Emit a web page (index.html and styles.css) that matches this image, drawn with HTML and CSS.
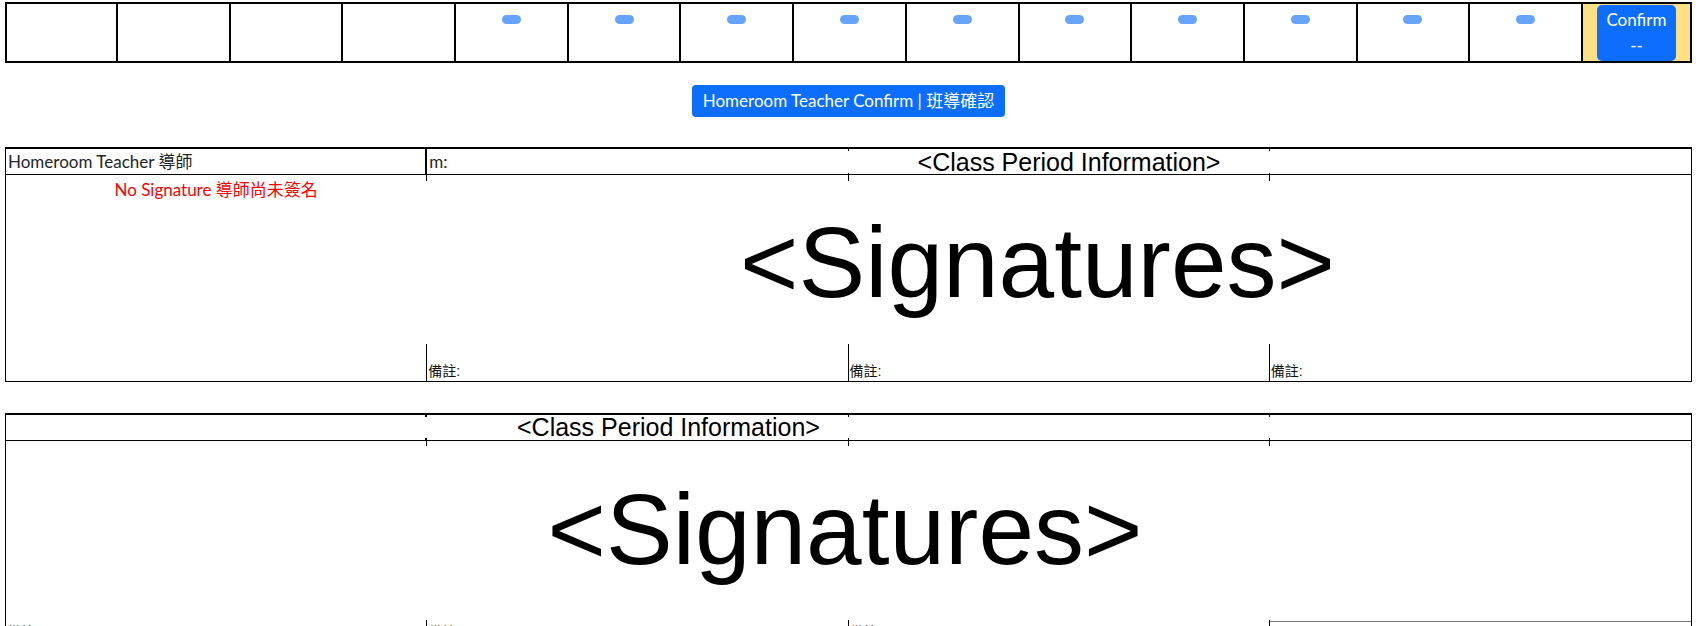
FILE: index.html
```html
<!DOCTYPE html>
<html lang="zh-Hant">
<head>
<meta charset="utf-8">
<title>Homeroom Teacher Confirm</title>
<link rel="stylesheet" href="styles.css">
</head>
<body>
<div class="page">
  <div class="steps">
    <div class="step"></div>
    <div class="step"></div>
    <div class="step"></div>
    <div class="step"></div>
    <div class="step"><span class="pill"></span></div>
    <div class="step"><span class="pill"></span></div>
    <div class="step"><span class="pill"></span></div>
    <div class="step"><span class="pill"></span></div>
    <div class="step"><span class="pill"></span></div>
    <div class="step"><span class="pill"></span></div>
    <div class="step"><span class="pill"></span></div>
    <div class="step"><span class="pill"></span></div>
    <div class="step"><span class="pill"></span></div>
    <div class="step"><span class="pill"></span></div>
    <div class="step step-confirm"><button class="btn-confirm">Confirm<br>--</button></div>
  </div>

  <div class="action">
    <button class="btn-homeroom">Homeroom Teacher Confirm | 班導確認</button>
  </div>

  <section class="sheet sheet-one">
    <div class="cell head first">Homeroom Teacher 導師</div>
    <div class="cell head">m:</div>
    <div class="cell head"></div>
    <div class="cell head last"></div>
    <div class="cell sig"><span class="nosig">No Signature 導師尚未簽名</span></div>
    <div class="cell sig"></div>
    <div class="cell sig"></div>
    <div class="cell sig last"></div>
    <div class="cell note"></div>
    <div class="cell note">備註:</div>
    <div class="cell note">備註:</div>
    <div class="cell note last">備註:</div>
    <div class="mask mask-head-one">&lt;Class Period Information&gt;</div>
    <div class="mask mask-sig-one">&lt;Signatures&gt;</div>
  </section>

  <section class="sheet sheet-two">
    <div class="cell head first"></div>
    <div class="cell head"></div>
    <div class="cell head"></div>
    <div class="cell head last"></div>
    <div class="cell sig"></div>
    <div class="cell sig"></div>
    <div class="cell sig"></div>
    <div class="cell sig last"></div>
    <div class="cell note">備註:</div>
    <div class="cell note">備註:</div>
    <div class="cell note">備註:</div>
    <div class="cell note last ruled"></div>
    <div class="mask mask-head-two">&lt;Class Period Information&gt;</div>
    <div class="mask mask-sig-two">&lt;Signatures&gt;</div>
  </section>
</div>
</body>
</html>
```

FILE: styles.css
```css
* { box-sizing: border-box; }

html, body {
  margin: 0;
  padding: 0;
  background: #fff;
  overflow: hidden;
}

body {
  font-family: Lato, "Noto Sans CJK TC", sans-serif;
  font-size: 16px;
  color: #212529;
}

.page {
  padding: 2px 9px 0 5px;
}

/* top step strip */
.steps {
  display: grid;
  grid-template-columns: 109px repeat(13, 1fr) 109px;
  border: 2px solid #000;
}

.step {
  height: 57px;
}

.step + .step {
  border-left: 2px solid #000;
}

.pill {
  display: block;
  width: 19px;
  height: 9px;
  margin: 11px auto 0;
  border-radius: 5px;
  background: #66a3fb;
}

.step-confirm {
  background: #fddf85;
  padding: 1px 14px 0;
}

.btn-confirm {
  display: block;
  width: 100%;
  height: 56px;
  border: 0;
  border-radius: 5px;
  background: #0d6efd;
  color: #fff;
  font-family: Lato, sans-serif;
  font-size: 17px;
  line-height: 26px;
  padding: 0;
}

/* homeroom action */
.action {
  display: flex;
  justify-content: center;
  padding-top: 22px;
}

.btn-homeroom {
  border: 0;
  border-radius: 4px;
  background: #0d6efd;
  color: #fff;
  font-family: Lato, "Noto Sans CJK TC", sans-serif;
  font-size: 17px;
  font-weight: 400;
  line-height: 24px;
  padding: 4px 11px;
}

/* signature sheets */
.sheet {
  position: relative;
  display: grid;
  grid-template-columns: repeat(4, 1fr);
  border: 1px solid #000;
  border-top-width: 2px;
}

.sheet-one {
  margin-top: 30px;
  grid-template-rows: 26px 170px 36px;
}

.sheet-two {
  margin-top: 31px;
  grid-template-rows: 26px 180px 40px;
}

.cell {
  border-right: 1px solid #000;
  min-width: 0;
}

.cell.last {
  border-right: 0;
}

.head {
  border-bottom: 1px solid #000;
  padding: 0 2px;
  font-size: 17px;
  line-height: 25px;
  white-space: nowrap;
  overflow: hidden;
}

.head.first {
  border-right-width: 2px;
}

.sig {
  text-align: center;
  padding-top: 5px;
}

.nosig {
  color: #ff0000;
  font-size: 17px;
  line-height: 20px;
}

.note {
  display: flex;
  align-items: flex-end;
  padding: 0 1px 2px;
  font-family: "Liberation Sans", "Noto Sans CJK TC", sans-serif;
  font-size: 14px;
  line-height: 16px;
  color: #111;
}

.sheet-two .note {
  align-items: flex-start;
  padding-top: 3px;
}

.ruled {
  border-top: 1px solid #777;
}

/* placeholder masks laid over the sheet */
.mask {
  position: absolute;
  background: #fff;
  font-family: "Liberation Sans", Arial, sans-serif;
  color: #000;
  white-space: nowrap;
}

.mask-head-one {
  left: 446px;
  top: 2px;
  width: 1234px;
  height: 22px;
  font-size: 25px;
  line-height: 22px;
  text-align: center;
}

.mask-sig-one {
  left: 378px;
  top: 32px;
  width: 1307px;
  height: 163px;
  padding-top: 25px;
  font-size: 100px;
  line-height: 112px;
  text-align: center;
}

.mask-head-two {
  left: 2px;
  top: 2px;
  width: 1680px;
  height: 21px;
  padding-left: 509px;
  font-size: 25px;
  line-height: 21px;
}

.mask-sig-two {
  left: 0;
  top: 31px;
  width: 1685px;
  height: 174px;
  padding-top: 27px;
  padding-right: 7px;
  font-size: 100px;
  line-height: 112px;
  text-align: center;
}
```
